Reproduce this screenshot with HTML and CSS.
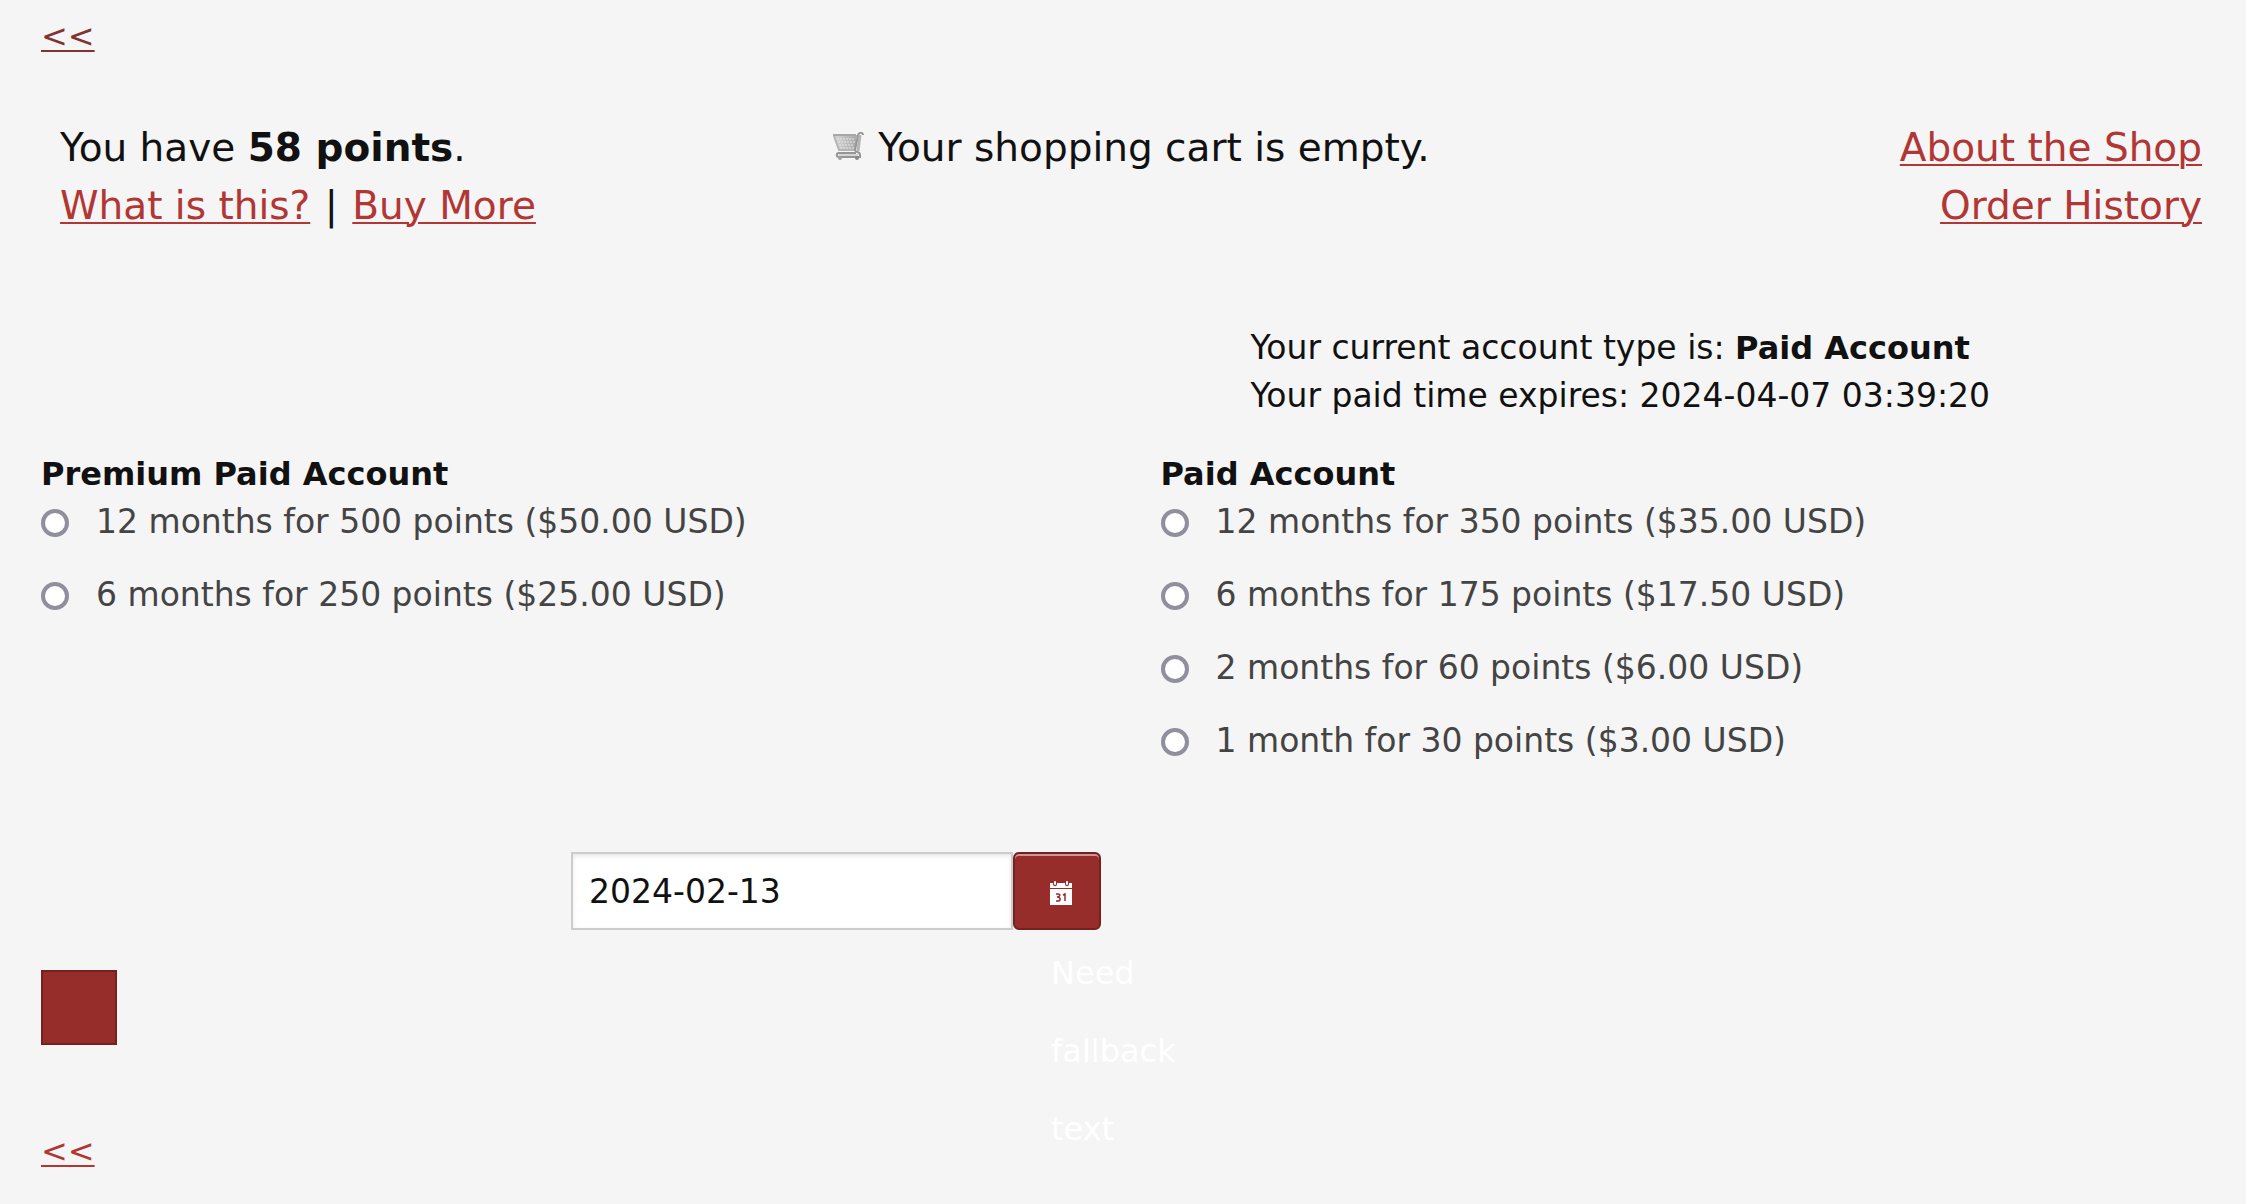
FILE: index.html
```html
<!DOCTYPE html>
<html lang="en">
<head>
<meta charset="utf-8">
<meta name="viewport" content="width=device-width, initial-scale=1">
<title>Shop</title>
<link rel="stylesheet" href="styles.css">
</head>
<body>
<nav class="back"><a class="back-link visited" href="#shop">&lt;&lt;</a></nav>
<header class="shop-header">
  <div class="points">You have <strong>58 points</strong>.<br><a href="#what">What is this?</a> <span class="divider">|</span> <a href="#buy">Buy More</a></div>
  <div class="cart">
    <svg class="cart-icon" viewBox="0 0 32 32" aria-hidden="true">
      <defs><linearGradient id="metal" x1="0" y1="0" x2="1" y2="0"><stop offset="0" stop-color="#d8d8d8"/><stop offset="1" stop-color="#a8a8a8"/></linearGradient></defs>
      <path d="M2 4H25L23 19H7Z" fill="url(#metal)"/>
      <path d="M5 8H23M6 11H23M7 14H22M8 17H22" stroke="#e4e4e4" stroke-width="1" stroke-dasharray="2 1"/>
      <path d="M1 4H24" stroke="#a8a8a8" stroke-width="2"/>
      <path d="M2 5L7 19H22" fill="none" stroke="#b5b5b5" stroke-width="2"/>
      <path d="M31 4C31 1 26 1 26 5L23 19C23 22 28 20 28 24V26H7C4 26 4 22 7 22H24" fill="none" stroke="#959595" stroke-width="2"/>
      <path d="M28 4L26 20" stroke="#b4b4b4" stroke-width="3"/>
      <path d="M7 24H26" stroke="#d4d4d4" stroke-width="2"/>
      <circle cx="8" cy="27" r="2" fill="#a0a0a0"/><circle cx="25" cy="27" r="2" fill="#888"/>
    </svg>
    Your shopping cart is empty.
  </div>
  <div class="links"><a href="#about">About the Shop</a><br><a href="#history">Order History</a></div>
</header>
<main>
  <form class="account-form" action="#">
    <div class="columns">
      <p class="status">Your current account type is: <strong>Paid Account</strong><br>Your paid time expires: 2024-04-07 03:39:20</p>
      <fieldset class="plans">
        <legend>Premium Paid Account</legend>
        <label class="plan"><input type="radio" name="plan">12 months for 500 points ($50.00 USD)</label>
        <label class="plan"><input type="radio" name="plan">6 months for 250 points ($25.00 USD)</label>
      </fieldset>
      <fieldset class="plans">
        <legend>Paid Account</legend>
        <label class="plan"><input type="radio" name="plan">12 months for 350 points ($35.00 USD)</label>
        <label class="plan"><input type="radio" name="plan">6 months for 175 points ($17.50 USD)</label>
        <label class="plan"><input type="radio" name="plan">2 months for 60 points ($6.00 USD)</label>
        <label class="plan"><input type="radio" name="plan">1 month for 30 points ($3.00 USD)</label>
      </fieldset>
    </div>
    <div class="date-row">
      <input class="date" type="text" value="2024-02-13" aria-label="Delivery date">
      <button class="picker" type="button">
        <svg class="calendar-icon" viewBox="0 0 22 24" aria-hidden="true">
          <path d="M0 2H3V3C3 6 7 6 7 3V2H15V3C15 6 19 6 19 3V2H22V7H0ZM0 8H22V24H0Z" fill="#fff"/>
          <rect x="4" y="0" width="2" height="4" rx="1" fill="#fff"/><rect x="16" y="0" width="2" height="4" rx="1" fill="#fff"/>
          <path d="M6 13H8C11 13 10 16 7 16C11 16 11 20 8 20H6M13 14L15 13V20" fill="none" stroke="#962d2b" stroke-width="1.5"/>
        </svg>
        <span class="fallback">Need<br>fallback<br>text</span>
      </button>
    </div>
    <button class="submit" type="submit" aria-label="Add to cart"></button>
  </form>
</main>
<nav class="back"><a class="back-link" href="#shop">&lt;&lt;</a></nav>
</body>
</html>
```
FILE: styles.css
```css
* { box-sizing: border-box; }
body {
  margin: 0;
  padding: 12px 44px 28px 41px;
  background: #f5f5f5;
  color: #111;
  font: 32px/48px Verdana, "DejaVu Sans", sans-serif;
}
a { color: #b13634; text-decoration-thickness: 2px; text-underline-offset: 3px; }
.back { height: 48px; }
.visited { color: #7f3434; }
.shop-header {
  display: grid;
  grid-template-columns: 1fr auto 1fr;
  margin-top: 59px;
  padding-left: 19px;
  font-size: 39px;
  line-height: 58px;
}
.divider { padding: 0 2px; }
.cart { display: flex; gap: 14px; }
.cart-icon { width: 32px; height: 32px; margin-top: 12px; }
.links { text-align: right; }
.columns {
  display: grid;
  grid-template-columns: 1fr 1fr;
  column-gap: 78px;
  margin-top: 89px;
}
.status { grid-column: 2; margin: 0 0 30px; padding-left: 90px; font-size: 33px; }
.status strong { font-size: 32px; }
.plans { margin: 0; padding: 0; border: 0; min-width: 0; }
legend { padding: 0; font-weight: bold; }
.plan {
  display: flex;
  align-items: center;
  gap: 27px;
  margin-bottom: 25px;
  color: #444;
  font-size: 33px;
}
.plan input {
  appearance: none;
  width: 28px;
  height: 28px;
  margin: 2px 0 0;
  border: 4px solid #8f8f9d;
  border-radius: 50%;
  background: #fff;
}
.date-row { display: flex; margin: 62px 0 40px; padding-left: 530px; }
.date {
  width: 442px;
  height: 78px;
  padding: 0 16px;
  border: 2px solid #ccc;
  border-radius: 0;
  background: #fff;
  box-shadow: inset 0 2px 4px rgba(0, 0, 0, .1);
  color: #111;
  font: inherit;
  font-size: 33px;
}
.picker {
  position: relative;
  width: 88px;
  height: 78px;
  padding: 0 0 0 8px;
  border: 2px solid #73221f;
  border-radius: 6px;
  background: #962d2b;
  box-shadow: inset 0 2px 0 rgba(255, 255, 255, .5);
  color: #fff;
  font: inherit;
  text-align: left;
}
.calendar-icon { display: block; width: 22px; height: 24px; margin: 4px auto 0; }
.fallback { position: absolute; top: 80px; left: 36px; line-height: 78px; }
.submit {
  display: block;
  width: 76px;
  height: 75px;
  margin-bottom: 82px;
  border: 2px solid #73221f;
  background: #962d2b;
}
```
